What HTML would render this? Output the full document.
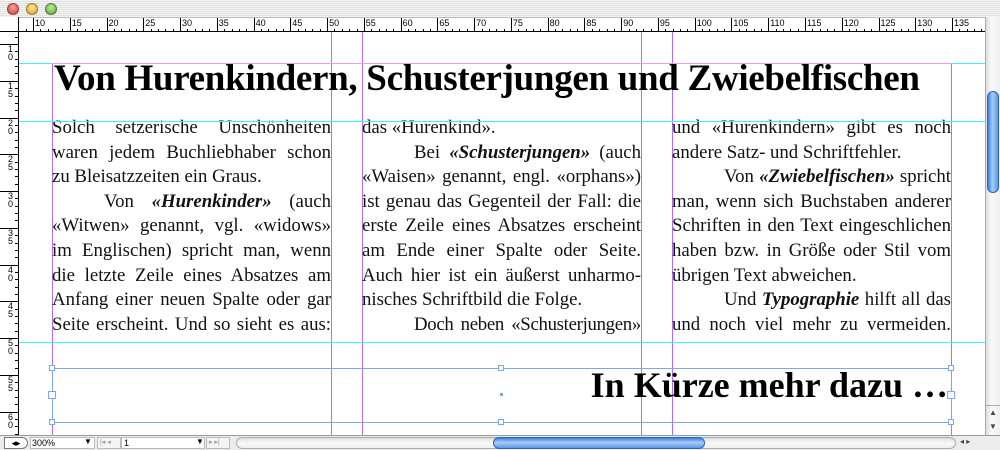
<!DOCTYPE html>
<html><head><meta charset="utf-8"><style>
*{margin:0;padding:0;box-sizing:border-box}
body{width:1000px;height:450px;overflow:hidden;background:#fff;position:relative;font-family:"Liberation Serif",serif}
.tb{position:absolute;left:0;top:0;width:1000px;height:17px;background:repeating-linear-gradient(#f2f2f2 0 1px,#e2e2e2 1px 2px)}
.dot{position:absolute;top:3px;width:12px;height:12px;border-radius:50%;border:1px solid rgba(0,0,0,.35)}
.rt{position:absolute;left:0;top:17px;width:985px;height:15px;background:#fff;border-bottom:1px solid #000;border-top:1px solid #bbb}
.rl{position:absolute;left:0;top:32px;width:19px;height:403px;background:#fff;border-right:1px solid #000}
.t{position:absolute;background:#000}
.n{position:absolute;font:9px "Liberation Sans",sans-serif;color:#000}
.ln{position:absolute;font-size:18.8px;white-space:nowrap;height:22px;line-height:22px;color:#111;z-index:6}
.j{text-align:justify;text-align-last:justify}
.g{position:absolute;z-index:5}
.c{position:absolute;z-index:8;height:1px;background:#3ef0ff}
.h{position:absolute;width:6px;height:6px;border:1px solid #7aa8ef;background:#fff;z-index:7}
</style></head><body>
<div class="tb"></div>
<div class="dot" style="left:7px;background:radial-gradient(circle at 50% 35%,#f6a3a0,#d23b33)"></div>
<div class="dot" style="left:26px;background:radial-gradient(circle at 50% 35%,#fbe29a,#e0a21b)"></div>
<div class="dot" style="left:45px;background:radial-gradient(circle at 50% 35%,#bdeb9a,#55a72c)"></div>
<div class="rt" id="rt"></div>
<div class="rl" id="rl"></div>
<div style="position:absolute;left:0;top:17px;width:19px;height:15px;border-right:1px solid #000;border-bottom:1px solid #000;background:#fff"></div>

<div class="c" style="left:19px;top:63px;width:966px"></div>
<div class="c" style="left:19px;top:121px;width:966px"></div>
<div class="c" style="left:19px;top:342px;width:966px"></div>
<div class="g" style="left:52px;top:63px;width:900px;height:1px;background:#e79cf5;z-index:9"></div>
<div class="g" style="left:52px;top:63px;width:1px;height:372px;background:#b66cf2"></div>
<div class="g" style="left:331px;top:32px;width:1px;height:403px;background:#b66cf2"></div>
<div class="g" style="left:362px;top:32px;width:1px;height:403px;background:#b66cf2"></div>
<div class="g" style="left:641px;top:32px;width:1px;height:403px;background:#b66cf2"></div>
<div class="g" style="left:672px;top:32px;width:1px;height:403px;background:#b66cf2"></div>
<div class="g" style="left:951px;top:63px;width:1px;height:372px;background:#b66cf2"></div>

<div style="position:absolute;z-index:6;left:54px;top:57px;font-size:37px;font-weight:bold;white-space:nowrap;letter-spacing:-0.3px">Von Hurenkindern, Schusterjungen und Zwiebelfischen</div>

<div id="txt"></div>

<div class="g" style="left:52px;top:368px;width:900px;height:1px;background:#7aa8ef"></div>
<div class="g" style="left:52px;top:422px;width:900px;height:1px;background:#7aa8ef"></div>
<div class="g" style="left:52px;top:368px;width:1px;height:55px;background:#7aa8ef"></div>
<div class="g" style="left:951px;top:368px;width:1px;height:55px;background:#7aa8ef"></div>
<div class="h" style="left:49px;top:365px"></div><div class="h" style="left:498px;top:365px"></div><div class="h" style="left:948px;top:365px"></div>
<div class="h" style="left:49px;top:419px"></div><div class="h" style="left:498px;top:419px"></div><div class="h" style="left:948px;top:419px"></div>
<div class="h" style="left:48px;top:391px;width:8px;height:8px"></div><div class="h" style="left:947px;top:391px;width:8px;height:8px"></div>
<div class="g" style="left:500px;top:393px;width:3px;height:3px;background:#7aa8ef"></div>
<div style="position:absolute;z-index:6;right:52px;top:364px;font-size:36px;font-weight:bold;white-space:nowrap">In Kürze mehr dazu …</div>

<div style="position:absolute;left:985px;top:17px;width:15px;height:418px;background:linear-gradient(90deg,#ddd,#fafafa 40%,#eee);border-left:1px solid #aaa"></div>
<div style="position:absolute;left:987px;top:91px;width:12px;height:102px;border-radius:6px;background:linear-gradient(90deg,#3f7fe0,#a7cdf7 45%,#5d98ea);border:1px solid #2f63b8"></div>
<div style="position:absolute;left:986px;top:405px;width:14px;height:30px;font:8px sans-serif;color:#444;text-align:center;line-height:14px;border-top:1px solid #aaa">▲<br>▼</div>
<div style="position:absolute;left:0;top:435px;width:1000px;height:15px;background:#ececec;border-top:1px solid #999"></div>
<div style="position:absolute;left:4px;top:437px;width:24px;height:12px;border:1px solid #777;border-radius:0 6px 6px 0;background:#fff;font:9px sans-serif;text-align:center;line-height:10px">◂▸</div>
<div style="position:absolute;left:30px;top:437px;width:65px;height:12px;background:#fff;border:1px solid #bbb;font:9px 'Liberation Sans',sans-serif;line-height:10px;padding-left:1px">300%</div>
<div style="position:absolute;left:84px;top:437px;font:8px sans-serif">▼</div>
<div style="position:absolute;left:97px;top:437px;width:24px;height:12px;border:1px solid #bbb;background:#f4f4f4;font:7px sans-serif;color:#999;line-height:10px">&nbsp;|◂ ◂</div>
<div style="position:absolute;left:121px;top:437px;width:84px;height:12px;background:#fff;border:1px solid #bbb;font:9px 'Liberation Sans',sans-serif;line-height:10px;padding-left:2px">1</div>
<div style="position:absolute;left:196px;top:437px;font:8px sans-serif">▼</div>
<div style="position:absolute;left:206px;top:437px;width:24px;height:12px;border:1px solid #bbb;background:#f4f4f4;font:7px sans-serif;color:#999;line-height:10px">&nbsp;▸ ▸|</div>
<div style="position:absolute;left:236px;top:437px;width:720px;height:12px;border-radius:6px;background:linear-gradient(#ddd,#fafafa 50%,#eee);border:1px solid #aaa"></div>
<div style="position:absolute;left:493px;top:437px;width:212px;height:12px;border-radius:6px;background:linear-gradient(#3f7fe0,#a7cdf7 45%,#5d98ea);border:1px solid #2f63b8"></div>
<div style="position:absolute;left:960px;top:437px;font:8px sans-serif;color:#444">◂ ▸</div>
<script>
var rt=document.getElementById('rt'),rl=document.getElementById('rl'),h='';
var s=36.76/5;
for(var i=0;i<=140;i++){var x=33+(i-10)*s;if(x<19||x>984)continue;
h+='<div class="t" style="left:'+x.toFixed(1)+'px;top:'+(14-(i%5==0?14:3))+'px;width:1px;height:'+(i%5==0?14:3)+'px"></div>';
if(i%5==0)h+='<div class="n" style="left:'+(x+2).toFixed(1)+'px;top:0">'+i+'</div>';}
rt.innerHTML=h;h='';
for(var i=0;i<=70;i++){var y=44+(i-10)*s-32;if(y<0||y>402)continue;
h+='<div class="t" style="left:'+(i%5==0?0:15)+'px;top:'+y.toFixed(1)+'px;width:'+(i%5==0?19:3)+'px;height:1px"></div>';
if(i%5==0){var d=String(i).split('');h+='<div class="n" style="left:8px;top:'+(y+1).toFixed(1)+'px;line-height:8px;width:6px">'+d.join('<br>')+'</div>';}}
rl.innerHTML=h;
var cols=[[52,[['Solch setzerische Unschönheiten',1],['waren jedem Buchliebhaber schon',1],['zu Bleisatzzeiten ein Graus.',0],['Von <b><i>«Hurenkinder»</i></b> (auch',2],['«Witwen» genannt, vgl. «widows»',1],['im Englischen) spricht man, wenn',1],['die letzte Zeile eines Absatzes am',1],['Anfang einer neuen Spalte oder gar',1],['Seite erscheint. Und so sieht es aus:',1]]],
[362,[['das «Hurenkind».',0],['Bei <b><i>«Schusterjungen»</i></b> (auch',2],['«Waisen» genannt, engl. «orphans»)',1],['ist genau das Gegenteil der Fall: die',1],['erste Zeile eines Absatzes erscheint',1],['am Ende einer Spalte oder Seite.',1],['Auch hier ist ein äußerst unharmo-',1],['nisches Schriftbild die Folge.',0],['<span style="letter-spacing:-0.3px">Doch neben «Schusterjungen»</span>',2]]],
[672,[['und «Hurenkindern» gibt es noch',1],['andere Satz- und Schriftfehler.',0],['Von <b><i>«Zwiebelfischen»</i></b> spricht',2],['man, wenn sich Buchstaben anderer',1],['Schriften in den Text eingeschlichen',1],['haben bzw. in Größe oder Stil vom',1],['übrigen Text abweichen.',0],['Und <b><i>Typographie</i></b> hilft all das',2],['und noch viel mehr zu vermeiden.',1]]]];
h='';
cols.forEach(function(c){c[1].forEach(function(l,k){var ind=l[1]==2?52:0;
h+='<div class="ln'+(l[1]?' j':'')+'" style="left:'+(c[0]+ind)+'px;width:'+(279-ind)+'px;top:'+(117+k*24.6).toFixed(1)+'px">'+l[0]+'</div>';});});
document.getElementById('txt').innerHTML=h;
</script>
</body></html>
